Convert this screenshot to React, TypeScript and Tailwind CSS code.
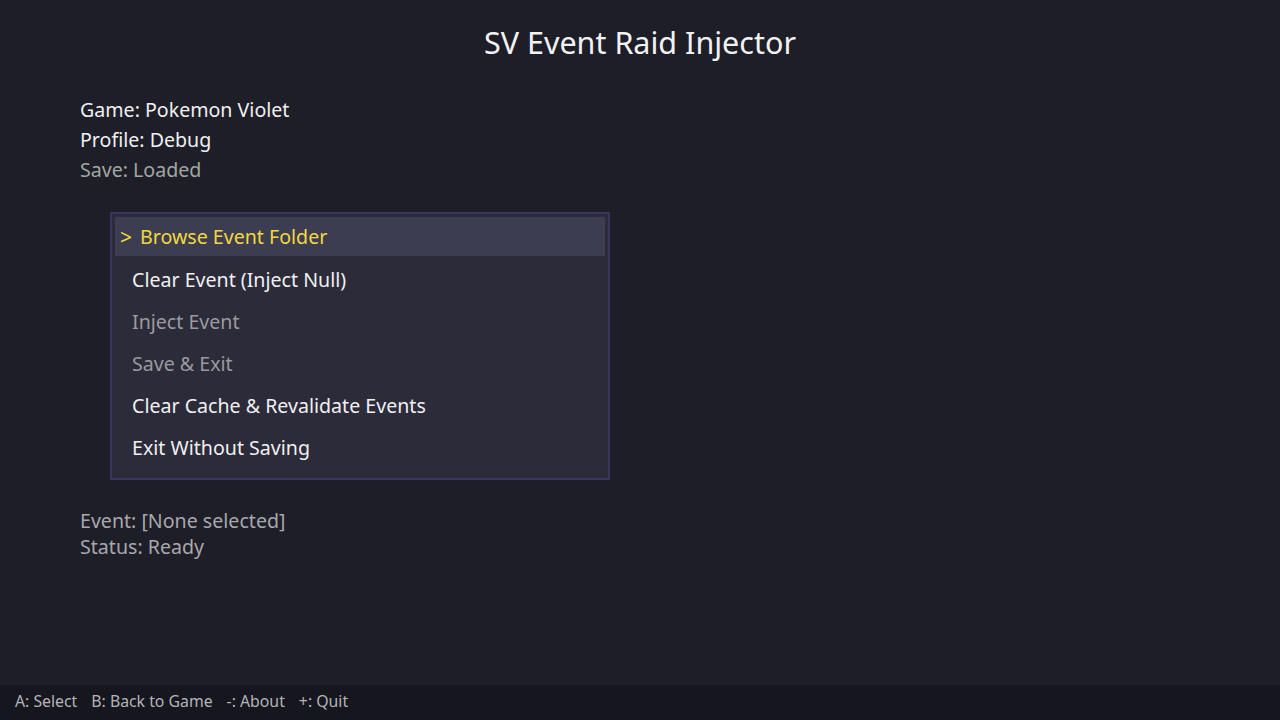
export default function App() {
  const items = [
    { label: "Browse Event Folder", state: "selected" },
    { label: "Clear Event (Inject Null)", state: "enabled" },
    { label: "Inject Event", state: "disabled" },
    { label: "Save & Exit", state: "disabled" },
    { label: "Clear Cache & Revalidate Events", state: "enabled" },
    { label: "Exit Without Saving", state: "enabled" },
  ];

  return (
    <div
      className="w-[1280px] h-[720px] bg-[#1e1e28] flex flex-col text-[#f0f0f0] overflow-hidden"
      style={{ fontFamily: '"Noto Sans", "Open Sans", sans-serif' }}
    >
      <div className="flex-1 flex flex-col">
        <h1 className="text-[30.5px] leading-none text-center pt-[27px] text-[#f2f2f2]">SV Event Raid Injector</h1>

        <div className="pl-[80px] pt-[37px] text-[19.6px] leading-[30px] flex flex-col">
          <div>Game: Pokemon Violet</div>
          <div>Profile: Debug</div>
          <div className="text-[#a0a8a0]">Save: Loaded</div>
        </div>

        <div className="ml-[110px] mt-[27px] w-[500px] border-2 border-[#38355e] bg-[#2c2b3a] p-[3px] pb-[9px] flex flex-col">
          {items.map((it) =>
            it.state === "selected" ? (
              <div
                key={it.label}
                className="h-[39px] mb-[3px] flex items-center pl-[5px] pt-[2px] text-[19.6px] bg-[#3d3d52] text-[#f2d83e]"
              >
                <span className="text-[21px] leading-none">&gt;</span>
                <span className="ml-[8px]">{it.label}</span>
              </div>
            ) : (
              <div
                key={it.label}
                className={
                  "h-[42px] flex items-center pl-[17px] text-[19.6px] " +
                  (it.state === "disabled" ? "text-[#9a9a9e]" : "text-[#f0f0f0]")
                }
              >
                {it.label}
              </div>
            )
          )}
        </div>

        <div className="pl-[80px] pt-[28px] text-[19.6px] leading-[26px] text-[#a8a8ac] flex flex-col">
          <div>Event: [None selected]</div>
          <div>Status: Ready</div>
        </div>
      </div>

      <div className="h-[35px] bg-[#16161f] flex items-center gap-[14px] pl-[15px] pb-[1px] text-[15.8px] text-[#b4b4b8]">
        <span>A: Select</span>
        <span>B: Back to Game</span>
        <span>-: About</span>
        <span>+: Quit</span>
      </div>
    </div>
  );
}
